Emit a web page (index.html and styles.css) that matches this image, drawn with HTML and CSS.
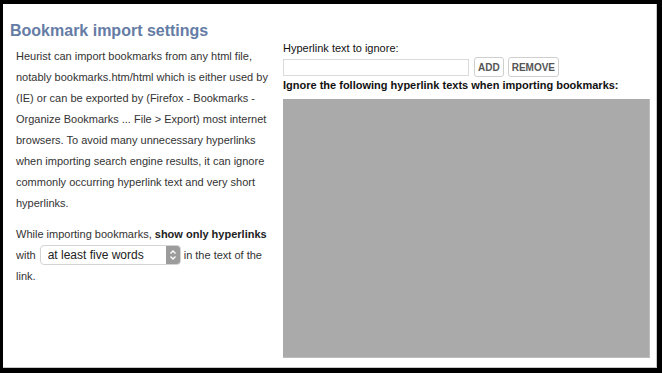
FILE: index.html
```html
<!DOCTYPE html>
<html lang="en">
<head>
    <meta charset="UTF-8">
    <title>Bookmark import settings</title>
    <link rel="stylesheet" href="styles.css">
</head>
<body>

<div class="panel">
    <h2 class="title">Bookmark import settings</h2>

    <div class="columns">
        <!-- explanation on the left -->
        <div class="intro">
            <p>Heurist can import bookmarks from any html file, notably bookmarks.htm/html which is either used by (IE) or can be exported by (Firefox - Bookmarks - Organize Bookmarks ... File &gt; Export) most internet browsers. To avoid many unnecessary hyperlinks when importing search engine results, it can ignore commonly occurring hyperlink text and very short hyperlinks.</p>
            <p>While importing bookmarks, <b>show only hyperlinks</b> with <span class="select-wrap"><select class="word-select">
                        <option>at least five words</option>
                        <option>at least four words</option>
                        <option>at least three words</option>
                        <option>any number of words</option>
                    </select><span class="select-arrow">
                        <svg width="14" height="18" viewBox="0 0 14 18">
                            <path d="M4.5 7.5 L7 5 L9.5 7.5" fill="none" stroke="#fff" stroke-width="1.3"/>
                            <path d="M4.5 10.5 L7 13 L9.5 10.5" fill="none" stroke="#fff" stroke-width="1.3"/>
                        </svg>
                    </span></span> in the text of the link.</p>
        </div>

        <!-- ignore list on the right -->
        <div class="ignore">
            <label class="ignore-label" for="ignoreText">Hyperlink text to ignore:</label>
            <div class="add-row">
                <input type="text" id="ignoreText" class="ignore-input">
                <button class="small-btn">ADD</button>
                <button class="small-btn">REMOVE</button>
            </div>
            <div class="ignore-head">Ignore the following hyperlink texts when importing bookmarks:</div>
            <div class="ignore-list"></div>
        </div>
    </div>
</div>

</body>
</html>
```

FILE: styles.css
```css
html, body {
    margin: 0;
    background-color: #000;
}
body {
    padding: 4px 5px 5px 3px;
    font-family: "Liberation Sans", Arial, sans-serif;
}
.panel {
    box-sizing: border-box;
    height: 364px;
    background-color: #fff;
    border-right: 1px solid #c8c8c8;
    border-bottom: 1px solid #c8c8c8;
    padding: 17px 6px 0 7px;
}
.title {
    margin: 0;
    font-size: 16px;
    line-height: 20px;
    font-weight: bold;
    color: #657ca5;
}
.columns {
    display: flex;
    gap: 14px;
}
.intro {
    width: 258px;
    padding: 5px 0 0 6px;
    font-size: 11px;
    line-height: 21px;
    color: #333;
}
.intro p {
    margin: 0 0 10px 0;
}
.intro b {
    color: #222;
}
.select-wrap {
    display: inline-block;
    position: relative;
    vertical-align: middle;
    margin: -2px 0 0 1px;
}
.word-select {
    display: block;
    -webkit-appearance: none;
    appearance: none;
    width: 141px;
    height: 20px;
    padding: 0 0 0 7px;
    font-family: "Liberation Sans", Arial, sans-serif;
    font-size: 12px;
    color: #222;
    background-color: #fff;
    border: 1px solid #d4d4d4;
    border-radius: 4px;
}
.select-arrow {
    position: absolute;
    top: 1px;
    right: 1px;
    width: 14px;
    height: 18px;
    background-color: #9c9c9c;
    border-radius: 0 3px 3px 0;
}
.select-arrow svg {
    display: block;
}
.ignore {
    flex: 1;
    display: flex;
    flex-direction: column;
    font-size: 11px;
    color: #111;
}
.ignore-label {
    line-height: 14px;
    margin-top: 0;
}
.add-row {
    display: flex;
    align-items: center;
    gap: 4px;
    margin-top: 2px;
}
.ignore-input {
    box-sizing: border-box;
    width: 186px;
    height: 17px;
    margin: 0 1px 0 0;
    border: 1px solid #dadada;
    padding: 1px 3px;
}
.small-btn {
    height: 20px;
    padding: 0 3px;
    font-family: "Liberation Sans", Arial, sans-serif;
    font-size: 10px;
    font-weight: bold;
    color: #555;
    background-color: #fff;
    border: 1px solid #cfcfcf;
    border-radius: 3px;
}
.ignore-head {
    font-weight: bold;
    line-height: 14px;
    margin-top: 1px;
}
.ignore-list {
    margin-top: 7px;
    width: 367px;
    height: 259px;
    box-sizing: border-box;
    background-color: #aaa;
    border-right: 1px solid #bdbdbd;
    border-bottom: 1px solid #bdbdbd;
}
```
